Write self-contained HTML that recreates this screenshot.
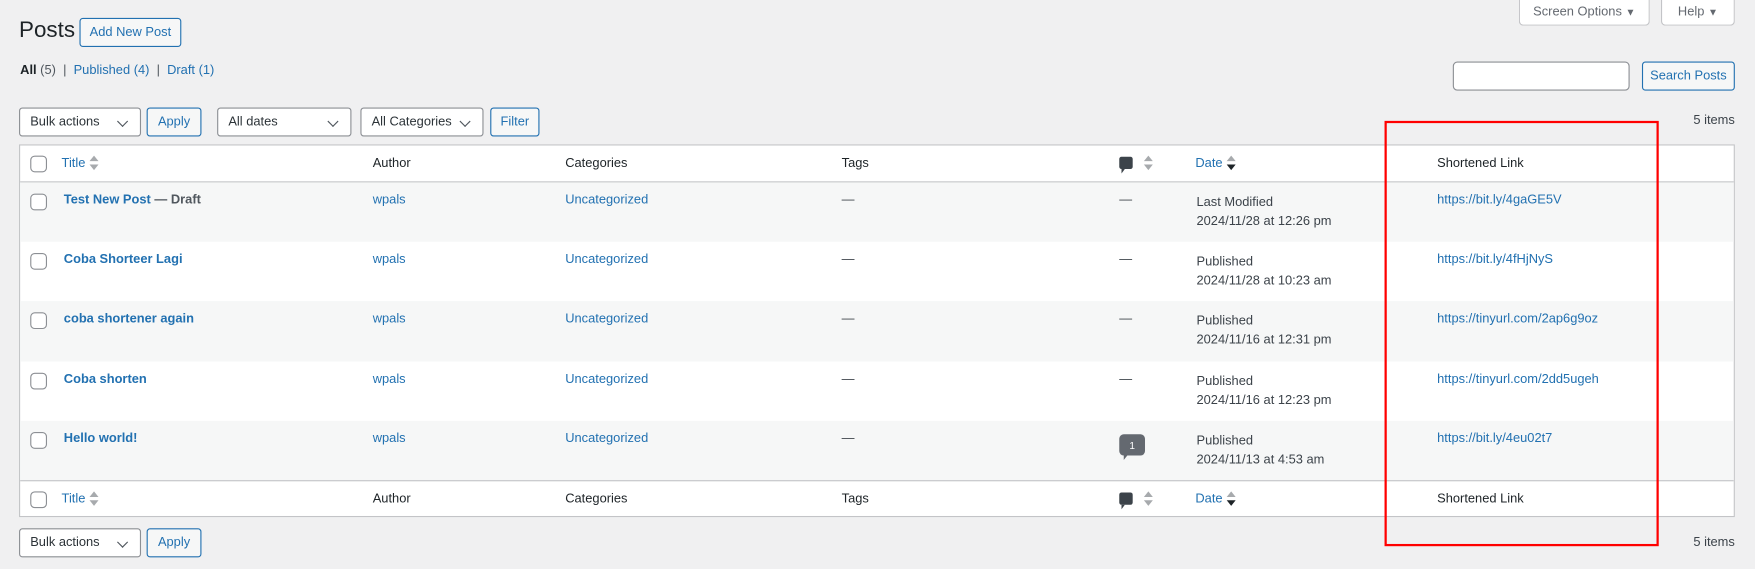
<!DOCTYPE html>
<html><head><meta charset="utf-8"><style>
*{box-sizing:border-box;margin:0;padding:0}
html,body{width:1755px;height:568px;overflow:hidden;background:#f0f0f1}
#w{position:absolute;left:0;top:0;width:1568px;height:508px;transform:scale(1.11926);transform-origin:0 0;font-family:"Liberation Sans",sans-serif;font-size:11.5px;color:#3c434a}
.a{position:absolute;white-space:nowrap}
a,.l{color:#2271b1;text-decoration:none}
.btn{position:absolute;border:1px solid #2271b1;border-radius:3px;background:#f6f7f7;color:#2271b1;display:flex;align-items:center;justify-content:center;font-size:11.5px}
.sel{position:absolute;border:1px solid #8c8f94;border-radius:3px;background:#fff;color:#2c3338;padding-left:9px;display:flex;align-items:center;font-size:11.5px}
.sel:after{content:"";position:absolute;right:12px;top:8px;width:6px;height:6px;border-right:1.5px solid #50575e;border-bottom:1.5px solid #50575e;transform:rotate(45deg)}
.tab{position:absolute;top:0;height:23px;border:1px solid #c3c4c7;border-top:none;border-radius:0 0 4px 4px;background:#fff;color:#646970;display:flex;align-items:center;justify-content:center}
#t{position:absolute;left:17px;top:129px;width:1533px;height:333px;border:1px solid #c3c4c7;background:#fff}
.row{position:absolute;left:0;width:1531px}
.cb{position:absolute;left:9px;width:15px;height:15px;border:1px solid #8c8f94;border-radius:4px;background:#fff}
.sort{display:inline-block;vertical-align:middle;margin-left:4px;width:8px;height:14px;position:relative}
.sort:before,.sort:after{content:"";position:absolute;left:0;border-left:4px solid transparent;border-right:4px solid transparent}
.sort:before{top:0;border-bottom:5px solid #a7aaad}
.sort:after{bottom:1px;border-top:5px solid #a7aaad}
.sort.d:after{border-top-color:#1d2327}
.bub{position:absolute;width:12px;height:11px;background:#3c434a;border-radius:2px}
.bub:after{content:"";position:absolute;left:2px;bottom:-4px;border-left:3px solid #3c434a;border-bottom:4px solid transparent}
.r .a{top:10px}
</style></head><body><div id="w">
<div class="tab" style="left:1357px;width:117px">Screen Options&nbsp;<span style="font-size:9px">▼</span></div>
<div class="tab" style="left:1484px;width:66px">Help&nbsp;<span style="font-size:9px">▼</span></div>
<div class="a" style="left:17px;top:16px;font-size:20px;color:#1d2327">Posts</div>
<div class="btn" style="left:71px;top:16px;width:91px;height:26px">Add New Post</div>
<div class="a" style="left:18px;top:57px;color:#50575e"><b style="color:#1d2327;font-weight:600">All</b> (5) &nbsp;|&nbsp; <a>Published <span>(4)</span></a> &nbsp;|&nbsp; <a>Draft (1)</a></div>
<div class="a" style="left:1298px;top:55px;width:158px;height:26px;border:1px solid #8c8f94;border-radius:4px;background:#fff"></div>
<div class="btn" style="left:1467px;top:55px;width:83px;height:26px">Search Posts</div>
<div class="sel" style="left:17px;top:96px;width:109px;height:26px">Bulk actions</div>
<div class="btn" style="left:131px;top:96px;width:49px;height:26px">Apply</div>
<div class="sel" style="left:194px;top:96px;width:120px;height:26px">All dates</div>
<div class="sel" style="left:322px;top:96px;width:110px;height:26px">All Categories</div>
<div class="btn" style="left:438px;top:96px;width:44px;height:26px">Filter</div>
<div class="a" style="right:18px;top:102px">5 items</div>
<div id="t">
<div class="row" style="top:0;height:33px;border-bottom:1px solid #c3c4c7">
<div class="cb" style="top:9px"></div>
<div class="a l" style="left:37px;top:9px">Title<span class="sort"></span></div>
<div class="a" style="left:315px;top:10px;color:#1d2327">Author</div>
<div class="a" style="left:487px;top:10px;color:#1d2327">Categories</div>
<div class="a" style="left:734px;top:10px;color:#1d2327">Tags</div>
<div class="bub" style="left:982px;top:10px"></div><span class="sort" style="position:absolute;left:1000px;top:9px"></span>
<div class="a l" style="left:1050px;top:9px">Date<span class="sort d"></span></div>
<div class="a" style="left:1266px;top:10px;color:#1d2327">Shortened Link</div>
</div>
<div class="row r" style="top:33px;height:53px;background:#f6f7f7">
<div class="cb" style="top:10px"></div>
<div class="a" style="left:39px;font-weight:bold;color:#2271b1">Test New Post <span style="color:#50575e">— Draft</span></div>
<div class="a l" style="left:315px">wpals</div><div class="a l" style="left:487px">Uncategorized</div>
<div class="a" style="left:734px">—</div><div class="a" style="left:982px">—</div>
<div class="a" style="left:1051px;line-height:17px">Last Modified<br>2024/11/28 at 12:26 pm</div>
<div class="a l" style="left:1266px">https://bit.ly/4gaGE5V</div></div>
<div class="row r" style="top:86px;height:53px">
<div class="cb" style="top:10px"></div>
<div class="a" style="left:39px;font-weight:bold;color:#2271b1">Coba Shorteer Lagi</div>
<div class="a l" style="left:315px">wpals</div><div class="a l" style="left:487px">Uncategorized</div>
<div class="a" style="left:734px">—</div><div class="a" style="left:982px">—</div>
<div class="a" style="left:1051px;line-height:17px">Published<br>2024/11/28 at 10:23 am</div>
<div class="a l" style="left:1266px">https://bit.ly/4fHjNyS</div></div>
<div class="row r" style="top:139px;height:54px;background:#f6f7f7">
<div class="cb" style="top:10px"></div>
<div class="a" style="left:39px;font-weight:bold;color:#2271b1">coba shortener again</div>
<div class="a l" style="left:315px">wpals</div><div class="a l" style="left:487px">Uncategorized</div>
<div class="a" style="left:734px">—</div><div class="a" style="left:982px">—</div>
<div class="a" style="left:1051px;line-height:17px">Published<br>2024/11/16 at 12:31 pm</div>
<div class="a l" style="left:1266px">https://tinyurl.com/2ap6g9oz</div></div>
<div class="row r" style="top:193px;height:53px">
<div class="cb" style="top:10px"></div>
<div class="a" style="left:39px;font-weight:bold;color:#2271b1">Coba shorten</div>
<div class="a l" style="left:315px">wpals</div><div class="a l" style="left:487px">Uncategorized</div>
<div class="a" style="left:734px">—</div><div class="a" style="left:982px">—</div>
<div class="a" style="left:1051px;line-height:17px">Published<br>2024/11/16 at 12:23 pm</div>
<div class="a l" style="left:1266px">https://tinyurl.com/2dd5ugeh</div></div>
<div class="row r" style="top:246px;height:54px;background:#f6f7f7;border-bottom:1px solid #c3c4c7">
<div class="cb" style="top:10px"></div>
<div class="a" style="left:39px;font-weight:bold;color:#2271b1">Hello world!</div>
<div class="a l" style="left:315px">wpals</div><div class="a l" style="left:487px">Uncategorized</div>
<div class="a" style="left:734px">—</div>
<div class="a" style="left:982px;top:12px;width:23px;height:19px;background:#646970;border-radius:4px;color:#fff;font-size:9px;display:flex;align-items:center;justify-content:center">1</div>
<div class="a" style="left:986px;top:30px;border-left:4px solid #646970;border-bottom:5px solid transparent"></div>
<div class="a" style="left:1051px;line-height:17px">Published<br>2024/11/13 at 4:53 am</div>
<div class="a l" style="left:1266px">https://bit.ly/4eu02t7</div></div>
<div class="row" style="top:300px;height:32px">
<div class="cb" style="top:9px"></div>
<div class="a l" style="left:37px;top:9px">Title<span class="sort"></span></div>
<div class="a" style="left:315px;top:10px;color:#1d2327">Author</div>
<div class="a" style="left:487px;top:10px;color:#1d2327">Categories</div>
<div class="a" style="left:734px;top:10px;color:#1d2327">Tags</div>
<div class="bub" style="left:982px;top:10px"></div><span class="sort" style="position:absolute;left:1000px;top:9px"></span>
<div class="a l" style="left:1050px;top:9px">Date<span class="sort d"></span></div>
<div class="a" style="left:1266px;top:10px;color:#1d2327">Shortened Link</div>
</div>
</div>
<div class="sel" style="left:17px;top:472px;width:109px;height:26px">Bulk actions</div>
<div class="btn" style="left:131px;top:472px;width:49px;height:26px">Apply</div>
<div class="a" style="right:18px;top:479px">5 items</div>
<div class="a" style="left:1237px;top:108px;width:245px;height:380px;border:2.5px solid #ff0000"></div>
</div></body></html>
